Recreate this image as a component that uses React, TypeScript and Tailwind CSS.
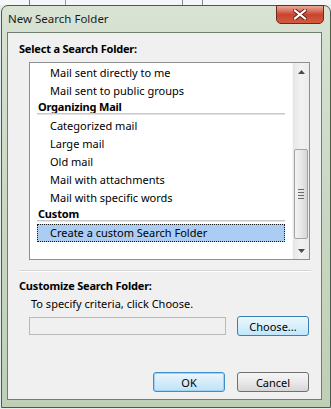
import React from "react";

const items1 = ["Mail sent directly to me", "Mail sent to public groups"];
const items2 = [
  "Categorized mail",
  "Large mail",
  "Old mail",
  "Mail with attachments",
  "Mail with specific words",
];

const Row = ({ text }: { text: string }) => (
  <div className="h-[18px] pl-[20px] leading-[18px] whitespace-nowrap">{text}</div>
);

const Header = ({ text }: { text: string }) => (
  <div className="h-[17px] flex flex-col">
    <div className="h-[13px] pl-[8px] leading-[13px] font-bold tracking-[-0.2px] whitespace-nowrap">{text}</div>
    <div className="ml-[7px] w-[248px] h-[2px] bg-[#c9c9c9] border-b border-[#e3e3e3]" />
  </div>
);

const Arrow = ({ up }: { up?: boolean }) => (
  <svg width="7" height="4" viewBox="0 0 7 4">
    <polygon points={up ? "0,4 7,4 3.5,0" : "0,0 7,0 3.5,4"} fill="#4a4a4a" />
  </svg>
);

const Btn = ({ label, kind }: { label: string; kind: "blue" | "focus" | "gray" }) => {
  const cls =
    kind === "gray"
      ? "border-[#707070] bg-gradient-to-b from-[#f6f6f6] via-[#e9e9e9] to-[#d6d6d6]"
      : kind === "focus"
      ? "border-[#3c8fcf] bg-gradient-to-b from-[#eaf6fd] via-[#d5ecfa] to-[#bfe2f6] shadow-[inset_0_0_0_1px_#9fd3f5]"
      : "border-[#3c7fb1] bg-gradient-to-b from-[#eaf6fd] via-[#d9f0fc] to-[#bee6fd]";
  return (
    <div
      className={`w-[72px] h-[20px] rounded-[3px] border flex items-center justify-center leading-none ${cls}`}
    >
      {label}
    </div>
  );
};

export default function App() {
  return (
    <div className="w-[331px] h-[409px] overflow-hidden bg-[#e7ebee] font-['Noto_Sans',sans-serif] text-[11px] text-black">
      {/* background window strip */}
      <div className="h-[5px] flex bg-[#f4f6f8]">
        <div className="w-[30px] border-r border-[#7a7a7a]" />
        <div className="w-[36px] border-r border-[#9a9a9a]" />
        <div className="w-[117px] border-r border-[#8a8a8a]" />
        <div className="w-[20px] border-r border-[#8a8a8a]" />
      </div>

      {/* dialog frame */}
      <div className="ml-[1px] w-[330px] h-[403px] rounded-t-[7px] border border-[#4d5b4a] bg-gradient-to-b from-[#d8e3d3] via-[#cad8c3] to-[#bfcfb6] flex flex-col">
        {/* title bar */}
        <div className="h-[26px] flex items-start justify-between">
          <div className="pl-[6px] pt-[5px] text-[11.5px] leading-[16px] text-[#1b1b1b]">New Search Folder</div>
          <div className="-mt-[1px] mr-[6px] w-[48px] h-[19px] rounded-b-[5px] border border-[#6b2a20] bg-gradient-to-b from-[#eaa898] via-[#c9452f] to-[#d25a3f] flex items-center justify-center">
            <svg width="14" height="11" viewBox="0 0 14 11">
              <path d="M2 1.5 L12 9.5 M12 1.5 L2 9.5" stroke="#5a1e14" strokeWidth="4" strokeLinecap="square" />
              <path d="M2 1.5 L12 9.5 M12 1.5 L2 9.5" stroke="#ffffff" strokeWidth="2.2" strokeLinecap="square" />
            </svg>
          </div>
        </div>

        {/* client area */}
        <div className="ml-[5px] w-[315px] h-[368px] border border-[#6f7f6d] bg-[#f0f0f0] flex flex-col">
          <div className="mt-[8px] ml-[11px] h-[16px] leading-[16px] font-bold tracking-[-0.2px]">Select a Search Folder:</div>

          {/* list box */}
          <div className="mt-[5px] ml-[21px] w-[281px] h-[198px] border border-[#8e8f8f] bg-white flex">
            <div className="w-[262px] pt-[1px] flex flex-col">
              {items1.map((t) => (
                <Row key={t} text={t} />
              ))}
              <Header text="Organizing Mail" />
              {items2.map((t) => (
                <Row key={t} text={t} />
              ))}
              <Header text="Custom" />
              <div className="ml-[7px] w-[248px] h-[18px] pl-[12px] leading-[16px] bg-[#abcdf3] border border-dotted border-[#1a1a1a] whitespace-nowrap">
                Create a custom Search Folder
              </div>
            </div>

            {/* scrollbar */}
            <div className="w-[17px] flex flex-col bg-gradient-to-r from-[#e6e6e6] via-[#f2f2f2] to-[#ebebeb] border-l border-[#f7f7f7]">
              <div className="h-[17px] flex items-center justify-center">
                <Arrow up />
              </div>
              <div className="flex-1 flex flex-col px-[1px]">
                <div className="mt-[69px] h-[90px] rounded-[2px] border border-[#a3a3a3] bg-gradient-to-r from-[#f4f4f4] via-[#e8e8e8] to-[#d6d6d6] flex flex-col items-center justify-center gap-[2px]">
                  <div className="w-[6px] h-[1px] bg-[#6a6a6a]" />
                  <div className="w-[6px] h-[1px] bg-[#6a6a6a]" />
                  <div className="w-[6px] h-[1px] bg-[#6a6a6a]" />
                  <div className="w-[6px] h-[1px] bg-[#6a6a6a]" />
                </div>
              </div>
              <div className="h-[17px] flex items-center justify-center">
                <Arrow />
              </div>
            </div>
          </div>

          <div className="mt-[10px] ml-[11px] w-[292px] h-[2px] border-t border-[#d5d5d5] border-b border-b-white" />

          <div className="mt-[6px] ml-[11px] h-[16px] leading-[16px] font-bold tracking-[-0.2px]">Customize Search Folder:</div>
          <div className="mt-[2px] ml-[23px] h-[16px] leading-[16px]">To specify criteria, click Choose.</div>

          <div className="mt-[4px] ml-[21px] flex items-start gap-[11px]">
            <div className="mt-[1px] w-[197px] h-[18px] border border-[#b9b9b9] bg-[#f0f0f0]" />
            <Btn label="Choose..." kind="blue" />
          </div>

          <div className="mt-[36px] ml-[145px] flex gap-[12px]">
            <Btn label="OK" kind="focus" />
            <Btn label="Cancel" kind="gray" />
          </div>
        </div>
      </div>
    </div>
  );
}
